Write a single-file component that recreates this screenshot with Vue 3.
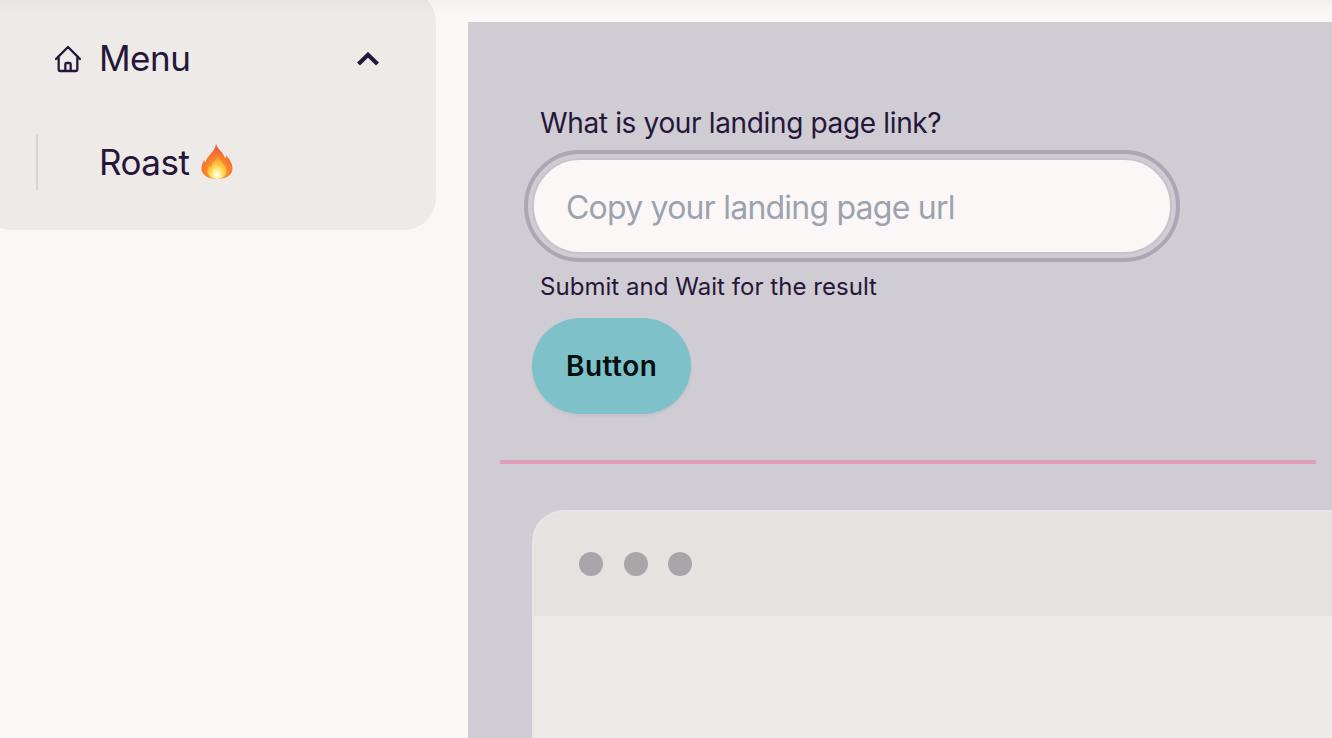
<script setup>
const dots = [1, 2, 3]
</script>

<template>
  <div class="page">
    <div class="top-shade"></div>
    <aside class="sidebar">
      <div class="menu-row">
        <svg class="home" viewBox="0 0 24 24" fill="none" stroke="currentColor" stroke-width="1.7" stroke-linecap="round" stroke-linejoin="round">
          <path d="M3 12l2-2m0 0l7-7 7 7M5 10v10a1 1 0 001 1h3m10-11l2 2m-2-2v10a1 1 0 01-1 1h-3m-6 0a1 1 0 001-1v-4a1 1 0 011-1h2a1 1 0 011 1v4a1 1 0 001 1m-6 0h6" />
        </svg>
        <span class="menu-title">Menu</span>
        <svg class="chevron" viewBox="0 0 22 14" fill="none" stroke="currentColor" stroke-width="4.2">
          <path d="M1.500 12L11 2.800 20.500 12" />
        </svg>
      </div>
      <div class="submenu">
        <span>Roast</span>
        <svg class="flame" viewBox="0 0 32 36">
          <defs>
            <radialGradient id="flameOuter" cx="50%" cy="80%" r="80%">
              <stop offset="0" stop-color="#ffb52e" />
              <stop offset="0.55" stop-color="#f77b2d" />
              <stop offset="1" stop-color="#e9503a" />
            </radialGradient>
            <radialGradient id="flameInner" cx="50%" cy="82%" r="70%">
              <stop offset="0" stop-color="#ffffff" />
              <stop offset="0.22" stop-color="#fff6a8" />
              <stop offset="0.6" stop-color="#ffc93e" />
              <stop offset="1" stop-color="#fb9a2c" />
            </radialGradient>
          </defs>
          <path fill="url(#flameOuter)" d="M15 0c.5 4 3.500 6.500 6 9.500 1.500 2 2.500 4 3 6 .5-1 1-1.800 1-3 3.500 3.500 6.500 8 6.500 13C31.500 32 25 36 16 36S.5 32 .5 25.500c0-3.500 1.500-6 2.500-8.500.3 1 .8 1.800 1.500 2.500C5 16 7.500 13 10 10.500 12.500 7.500 15 4.500 15 0z" />
          <path fill="url(#flameInner)" d="M17 12c.3 3.500 3 6 5.500 9 2 2.500 3.500 5 3 8-.7 4-4.500 7-9.500 7s-9-3-9.500-7c-.3-2.500 1-4.800 2.500-6.500.2 1 .6 1.800 1.200 2.300C10.500 21 12.500 19 14.500 17c1.300-1.500 2.300-3 2.500-5z" />
        </svg>
      </div>
    </aside>

    <main class="main">
      <section class="form">
        <label class="question">What is your landing page link?</label>
        <input class="url-input" type="text" placeholder="Copy your landing page url" />
        <p class="hint">Submit and Wait for the result</p>
        <button class="submit" type="button">Button</button>
      </section>

      <div class="divider"></div>

      <section class="browser">
        <div class="browser-bar">
          <span v-for="d in dots" :key="d" class="dot"></span>
        </div>
        <div class="browser-body"></div>
      </section>
    </main>
  </div>
</template>

<style>
html, body {
  margin: 0;
  height: 738px;
  overflow: hidden;
  background: #fbf7f6;
}
</style>

<style scoped>
.page {
  position: relative;
  display: flex;
  align-items: flex-start;
  width: 1332px;
  height: 738px;
  overflow: hidden;
  background: #fbf7f6;
  font-family: Inter, "Liberation Sans", sans-serif;
  color: #25163a;
}

.top-shade {
  position: absolute;
  top: 0;
  left: 0;
  right: 0;
  height: 14px;
  background: linear-gradient(to bottom, rgba(35, 22, 52, 0.03), rgba(35, 22, 52, 0));
  z-index: 2;
}

.sidebar {
  flex: none;
  box-sizing: border-box;
  width: 456px;
  height: 240px;
  margin: -10px 32px 0 -20px;
  padding: 21px 56px 40px 72px;
  background: #eeeae8;
  border-radius: 32px;
}

.menu-row {
  display: flex;
  align-items: center;
  height: 96px;
  font-size: 35px;
  letter-spacing: -0.5px;
}

.home {
  flex: none;
  width: 32px;
  height: 32px;
  margin-right: 15px;
}

.menu-title {
  flex: 1;
  margin-bottom: 2px;
}

.chevron {
  flex: none;
  width: 22px;
  height: 14px;
  margin-right: 1px;
}

.submenu {
  display: flex;
  align-items: center;
  gap: 12px;
  box-sizing: border-box;
  height: 56px;
  margin: 27px 0 0 -16px;
  padding-left: 61px;
  border-left: 2px solid #d8d5d2;
  font-size: 35px;
  letter-spacing: -0.5px;
}

.flame {
  flex: none;
  width: 32px;
  height: 36px;
  margin-bottom: 2px;
}

.main {
  flex: none;
  width: 880px;
  height: 716px;
  margin-top: 22px;
  padding-top: 80px;
  box-sizing: border-box;
  background: #cfccd3;
  overflow: hidden;
}

.form {
  display: flex;
  flex-direction: column;
  align-items: flex-start;
  padding-left: 64px;
}

.question {
  padding: 1px 8px 0;
  font-size: 28px;
  line-height: 40px;
  margin-bottom: 15px;
  letter-spacing: -0.35px;
}

.url-input {
  box-sizing: border-box;
  width: 640px;
  height: 96px;
  padding: 2px 32px 0;
  border: 2px solid #c7c3cb;
  border-radius: 48px;
  outline: 4px solid #aea6b3;
  outline-offset: 4px;
  background: #fbf7f6;
  font-family: inherit;
  font-size: 32px;
  letter-spacing: -0.78px;
  color: #25163a;
}

.url-input::placeholder {
  color: #9ca3af;
  opacity: 1;
}

.hint {
  margin: 16px 0 14px;
  padding: 0 8px;
  font-size: 24px;
  line-height: 34px;
  letter-spacing: 0.04px;
}

.submit {
  box-sizing: border-box;
  height: 96px;
  padding: 0 34px;
  border: none;
  border-radius: 48px;
  background: #7ec1c8;
  box-shadow: 0 2px 3px rgba(35, 22, 52, 0.06);
  font-family: inherit;
  font-size: 28px;
  font-weight: 600;
  letter-spacing: 0.5px;
  color: #041010;
}

.divider {
  width: 816px;
  height: 4px;
  margin: 46px 0 46px 32px;
  background: #e39db8;
}

.browser {
  box-sizing: border-box;
  width: 900px;
  height: 400px;
  margin-left: 64px;
  border: 2px solid #e6e5e9;
  border-radius: 32px;
  overflow: hidden;
  background: #eeeae7;
}

.browser-bar {
  display: flex;
  align-items: center;
  gap: 20.7px;
  box-sizing: border-box;
  height: 104px;
  padding: 0 0 0 45px;
  background: #e6e2df;
}

.dot {
  width: 24px;
  height: 24px;
  border-radius: 50%;
  background: #aaa5ab;
}
</style>
